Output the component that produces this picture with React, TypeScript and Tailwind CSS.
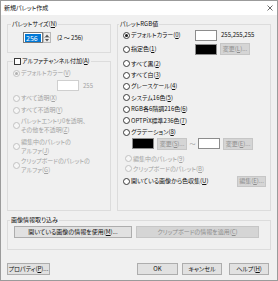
import React from 'react';

const Mn = ({ c }: { c: string }) => (
  <>
    (<u className="underline-offset-[1px]">{c}</u>)
  </>
);

function Radio({ checked = false, disabled = false }: { checked?: boolean; disabled?: boolean }) {
  return (
    <span
      className={`flex h-[7px] w-[7px] shrink-0 items-center justify-center rounded-full border ${
        disabled ? 'border-[#c2c2c2] bg-[#f6f6f6]' : 'border-[#3a3a3a] bg-white'
      }`}
    >
      {checked && (
        <span className={`h-[3px] w-[3px] rounded-full ${disabled ? 'bg-[#b0b0b0]' : 'bg-[#1a1a1a]'}`} />
      )}
    </span>
  );
}

function Opt({
  children,
  checked,
  disabled,
  className = '',
}: {
  children: React.ReactNode;
  checked?: boolean;
  disabled?: boolean;
  className?: string;
}) {
  return (
    <div className={`flex items-center gap-[1px] ${disabled ? 'text-[#a3a3a3]' : ''} ${className}`}>
      <Radio checked={checked} disabled={disabled} />
      <span className="whitespace-nowrap">{children}</span>
    </div>
  );
}

function Btn({
  children,
  disabled,
  className = '',
}: {
  children: React.ReactNode;
  disabled?: boolean;
  className?: string;
}) {
  return (
    <button
      className={`flex shrink-0 items-center justify-center border whitespace-nowrap ${
        disabled ? 'border-[#c6c6c6] bg-[#d5d5d5] text-[#8e8e8e]' : 'border-[#adadad] bg-[#e1e1e1]'
      } ${className}`}
    >
      {children}
    </button>
  );
}

const Swatch = ({ black }: { black?: boolean }) => (
  <span className={`h-[11px] w-[22px] shrink-0 border border-[#8c8c8c] ${black ? 'bg-black' : 'bg-white'}`} />
);

export default function App() {
  return (
    <div className="flex h-[281px] w-[278px] flex-col border border-[#9b9b9b] bg-[#f0f0f0] font-['Noto_Sans_CJK_JP','Noto_Sans_CJK_SC',sans-serif] text-[6px] leading-[8px] text-[#111] [font-feature-settings:'palt']">
      <div className="flex h-[14px] shrink-0 items-center justify-between bg-white pl-[3px] pr-[4px]">
        <span>新規パレット作成</span>
        <svg width="6" height="6" viewBox="0 0 6 6">
          <path d="M0.5 0.5L5.5 5.5M5.5 0.5L0.5 5.5" stroke="#444" strokeWidth="0.8" />
        </svg>
      </div>

      <div className="flex flex-1 flex-col px-[6px] pt-[5px]">
        <div className="flex h-[191px] shrink-0 gap-[6px]">
          {/* left column */}
          <div className="flex w-[104px] flex-col gap-[4px]">
            <fieldset className="h-[33px] shrink-0 border border-[#dcdcdc]">
              <legend className="ml-[3px] px-[1px]">
                パレットサイズ<Mn c="N" />
              </legend>
              <div className="flex items-center pl-[15px] pt-[4px]">
                <div className="flex h-[11px] w-[20px] items-center border border-[#7a7a7a] bg-white pl-[1px]">
                  <span className="flex h-[8px] w-[16px] items-center bg-[#0078d7] pl-[1px] text-[7px] text-white">
                    256
                  </span>
                </div>
                <div className="flex h-[11px] w-[8px] flex-col">
                  <div className="flex flex-1 items-center justify-center border border-[#b8b8b8] bg-[#ececec]">
                    <svg width="4" height="3" viewBox="0 0 4 3">
                      <path d="M0 3L2 0.5L4 3Z" fill="#555" />
                    </svg>
                  </div>
                  <div className="flex flex-1 items-center justify-center border border-t-0 border-[#b8b8b8] bg-[#ececec]">
                    <svg width="4" height="3" viewBox="0 0 4 3">
                      <path d="M0 0L2 2.5L4 0Z" fill="#555" />
                    </svg>
                  </div>
                </div>
                <span className="ml-[6px]">(2 ～ 256)</span>
              </div>
            </fieldset>

            <fieldset className="flex-1 border border-[#dcdcdc]">
              <legend className="ml-[5px] flex items-center gap-[1px] px-[1px]">
                <span className="h-[7px] w-[7px] border border-[#3a3a3a] bg-white" />
                <span>
                  アルファチャンネル付加<Mn c="A" />
                </span>
              </legend>
              <div className="flex flex-col pl-[5px]">
                <Opt checked disabled className="mt-[3px] h-[10px]">
                  デフォルトカラー<Mn c="V" />
                </Opt>
                <div className="mt-[2px] flex h-[11px] items-center pl-[44px]">
                  <span className="h-[11px] w-[22px] border border-[#cfcfcf] bg-white" />
                  <span className="ml-[4px] text-[#a3a3a3]">255</span>
                </div>
                <Opt disabled className="mt-[2px] h-[10px]">
                  すべて透明<Mn c="X" />
                </Opt>
                <Opt disabled className="mt-[2px] h-[10px]">
                  すべて不透明<Mn c="Y" />
                </Opt>
                <Opt disabled className="mt-[1px] h-[18px] leading-[9px]">
                  パレットエントリ0を透明、
                  <br />
                  その他を不透明<Mn c="Z" />
                </Opt>
                <Opt disabled className="mt-[3px] h-[18px] leading-[9px]">
                  編集中のパレットの
                  <br />
                  アルファ<Mn c="J" />
                </Opt>
                <Opt disabled className="mt-[1px] h-[18px] leading-[9px]">
                  クリップボードのパレットの
                  <br />
                  アルファ<Mn c="G" />
                </Opt>
              </div>
            </fieldset>
          </div>

          {/* right column */}
          <fieldset className="w-[154px] border border-[#dcdcdc]">
            <legend className="ml-[1px] px-[1px]">パレットRGB値</legend>
            <div className="flex flex-col pl-[5px] pr-[4px]">
              <div className="mt-[1px] flex h-[12px] items-center">
                <Opt checked className="w-[72px]">
                  デフォルトカラー<Mn c="0" />
                </Opt>
                <Swatch />
                <span className="ml-[4px]">255,255,255</span>
              </div>
              <div className="mt-[2px] flex h-[12px] items-center">
                <Opt className="w-[72px]">
                  指定色<Mn c="1" />
                </Opt>
                <Swatch black />
                <Btn disabled className="ml-[3px] h-[12px] w-[30px]">
                  変更(<u>L</u>)...
                </Btn>
              </div>
              <Opt className="mt-[3px] h-[11.4px]">
                すべて黒<Mn c="2" />
              </Opt>
              <Opt className="h-[11.4px]">
                すべて白<Mn c="3" />
              </Opt>
              <Opt className="h-[11.4px]">
                グレースケール<Mn c="4" />
              </Opt>
              <Opt className="h-[11.4px]">
                システム16色<Mn c="5" />
              </Opt>
              <Opt className="h-[11.4px]">
                RGB各6階調216色<Mn c="6" />
              </Opt>
              <Opt className="h-[11.4px]">
                OPTPiX標準236色<Mn c="7" />
              </Opt>
              <Opt className="h-[11.4px]">
                グラデーション<Mn c="8" />
              </Opt>
              <div className="flex h-[12px] items-center pl-[9px]">
                <Swatch black />
                <Btn disabled className="ml-[3px] h-[12px] w-[30px]">
                  変更(<u>S</u>)...
                </Btn>
                <span className="w-[11px] text-center text-[#a3a3a3]">～</span>
                <Swatch />
                <Btn disabled className="ml-[3px] h-[12px] w-[30px]">
                  変更(<u>E</u>)...
                </Btn>
              </div>
              <Opt disabled className="mt-[4px] h-[10px] pl-[2px]">
                編集中のパレット<Mn c="9" />
              </Opt>
              <Opt disabled className="h-[10px] pl-[2px]">
                クリップボードのパレット<Mn c="B" />
              </Opt>
              <div className="mt-[2px] flex h-[11px] items-center justify-between">
                <Opt>
                  開いている画像から色収集<Mn c="U" />
                </Opt>
                <Btn disabled className="h-[11px] w-[29px]">
                  編集(<u>E</u>)...
                </Btn>
              </div>
            </div>
          </fieldset>
        </div>

        <fieldset className="mt-[5px] h-[34px] shrink-0 border border-[#dcdcdc]">
          <legend className="ml-[2px] px-[1px]">画像情報取り込み</legend>
          <div className="flex gap-[4px] pl-[6px] pt-[2px]">
            <Btn className="h-[12px] w-[118px]">
              開いている画像の情報を使用<Mn c="M" />...
            </Btn>
            <Btn disabled className="h-[12px] w-[123px]">
              クリップボードの情報を適用<Mn c="C" />
            </Btn>
          </div>
        </fieldset>

        <div className="mt-[13px] flex h-[12px] shrink-0 items-center pr-[2px]">
          <Btn className="h-[12px] w-[43px]">
            プロパティ<Mn c="P" />...
          </Btn>
          <div className="flex-1" />
          <Btn className="h-[12px] w-[41px] border-[#0078d7]">OK</Btn>
          <Btn className="ml-[4px] h-[12px] w-[40px]">キャンセル</Btn>
          <Btn className="ml-[7px] h-[12px] w-[40px]">
            ヘルプ<Mn c="H" />
          </Btn>
        </div>
      </div>
    </div>
  );
}
